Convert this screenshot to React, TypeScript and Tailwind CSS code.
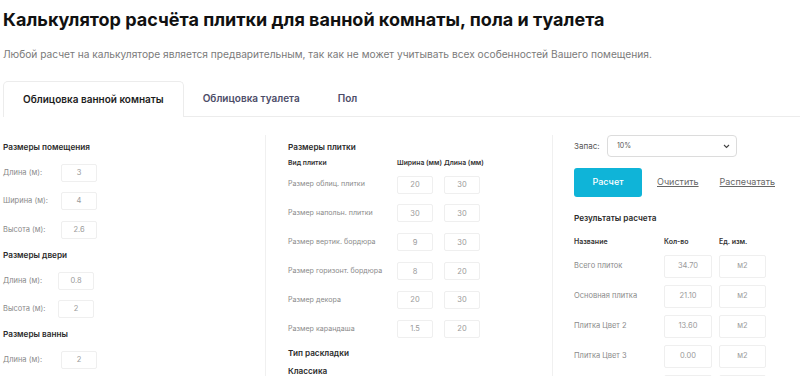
import React from "react";

const Inp = ({ v, w = "w-[36px]", h = "h-[18px]" }: { v: string; w?: string; h?: string }) => (
  <div className={`${w} ${h} border border-[#efefef] rounded-[2px] flex items-center justify-center text-[7.5px] text-[#9a9a9a] bg-white`}>
    {v}
  </div>
);

const LRow = ({ label, v, lw }: { label: string; v: string; lw: string }) => (
  <div className="flex items-center h-[18px]">
    <div className={`${lw} text-[7.5px] text-[#8a8a8a] whitespace-nowrap`}>{label}</div>
    <Inp v={v} />
  </div>
);

const H = ({ children }: { children: React.ReactNode }) => (
  <div className="h-[12px] flex items-center text-[8.2px] font-semibold text-[#2a2a2a] whitespace-nowrap">{children}</div>
);

export default function App() {
  const tiles = [
    ["Размер облиц. плитки", "20", "30"],
    ["Размер напольн. плитки", "30", "30"],
    ["Размер вертик. бордюра", "9", "30"],
    ["Размер горизонт. бордюра", "8", "20"],
    ["Размер декора", "20", "30"],
    ["Размер карандаша", "1.5", "20"],
  ];
  const results = [
    ["Всего плиток", "34.70"],
    ["Основная плитка", "21.10"],
    ["Плитка Цвет 2", "13.60"],
    ["Плитка Цвет 3", "0.00"],
    ["Плитка Цвет 4", "0.00"],
  ];
  return (
    <div className="w-[800px] h-[376px] overflow-hidden bg-white font-['Inter',sans-serif] px-[3px]">
      <h1 className="text-[18px] leading-[24px] font-bold text-[#111] pt-[8px] whitespace-nowrap">
        Калькулятор расчёта плитки для ванной комнаты, пола и туалета
      </h1>
      <p className="text-[10.2px] leading-[14px] text-[#7a7a7a] mt-[15px] whitespace-nowrap">
        Любой расчет на калькуляторе является предварительным, так как не может учитывать всех особенностей Вашего помещения.
      </p>
      <div className="flex mt-[20px] -mr-[3px]">
        <div className="h-[36px] px-[19px] flex items-center border border-b-0 border-[#ececec] rounded-t-[5px] text-[10px] font-semibold text-[#1c1c1c]">
          Облицовка ванной комнаты
        </div>
        <div className="flex-1 flex border-b border-[#ececec]">
          <div className="h-[35px] px-[19px] flex items-center text-[10px] font-semibold text-[#4c4c68]">
            Облицовка туалета
          </div>
          <div className="h-[35px] px-[19px] flex items-center text-[10px] font-semibold text-[#4c4c68]">
            Пол
          </div>
        </div>
      </div>
      <div className="flex mt-[18px] h-[300px]">
        <div className="w-[262px] pt-[6px] flex flex-col gap-[10.5px]">
          <H>Размеры помещения</H>
          <LRow label="Длина (м):" v="3" lw="w-[58px]" />
          <LRow label="Ширина (м):" v="4" lw="w-[58px]" />
          <LRow label="Высота (м):" v="2.6" lw="w-[58px]" />
          <H>Размеры двери</H>
          <LRow label="Длина (м):" v="0.8" lw="w-[55px]" />
          <LRow label="Высота (м):" v="2" lw="w-[55px]" />
          <H>Размеры ванны</H>
          <LRow label="Длина (м):" v="2" lw="w-[58px]" />
        </div>
        <div className="w-[287px] border-l border-[#f0f0f0] pl-[22px] pt-[6px] flex flex-col">
          <H>Размеры плитки</H>
          <div className="grid grid-cols-[98px_36px_36px] gap-x-[11px] mt-[5px] h-[10px] items-center text-[6.8px] font-semibold text-[#333]">
            <div>Вид плитки</div>
            <div className="whitespace-nowrap">Ширина (мм)</div>
            <div className="whitespace-nowrap">Длина (мм)</div>
          </div>
          <div className="flex flex-col gap-[10.9px] mt-[7.5px]">
            {tiles.map(([l, a, b]) => (
              <div key={l} className="grid grid-cols-[98px_36px_36px] gap-x-[11px] items-center">
                <div className="text-[7.1px] text-[#8a8a8a] whitespace-nowrap">{l}</div>
                <Inp v={a} />
                <Inp v={b} />
              </div>
            ))}
          </div>
          <div className="mt-[9px]"><H>Тип раскладки</H></div>
          <div className="mt-[5.7px]"><H>Классика</H></div>
        </div>
        <div className="flex-1 border-l border-[#f0f0f0] pl-[21px] -mr-[3px] flex flex-col">
          <div className="flex items-center h-[22px]">
            <div className="w-[33px] text-[8px] text-[#555]">Запас:</div>
            <div className="w-[130px] h-[22px] border border-[#dcdcdc] rounded-[4px] flex items-center justify-between pl-[9px] pr-[6px] text-[7px] text-[#555]">
              <span>10%</span>
              <svg width="7" height="5" viewBox="0 0 7 5" fill="none">
                <path d="M1 1l2.5 2.5L6 1" stroke="#444" strokeWidth="1.1" />
              </svg>
            </div>
          </div>
          <div className="flex items-center mt-[10.6px]">
            <div className="w-[68px] h-[29px] rounded-[3px] bg-[#0fb4d8] text-white text-[9px] font-medium flex items-center justify-center">
              Расчет
            </div>
            <span className="ml-[15px] text-[9px] text-[#666] underline">Очистить</span>
            <span className="ml-[21px] text-[9px] text-[#666] underline">Распечатать</span>
          </div>
          <div className="mt-[15.4px]"><H>Результаты расчета</H></div>
          <div className="grid grid-cols-[83px_48px_47px] gap-x-[7px] mt-[13px] h-[10px] items-center text-[7px] font-semibold text-[#333]">
            <div>Название</div>
            <div>Кол-во</div>
            <div>Ед. изм.</div>
          </div>
          <div className="flex flex-col gap-[7px] mt-[7.6px]">
            {results.map(([l, v]) => (
              <div key={l} className="grid grid-cols-[83px_48px_47px] gap-x-[7px] items-center">
                <div className="text-[7.5px] text-[#8a8a8a] whitespace-nowrap">{l}</div>
                <Inp v={v} w="w-[48px]" h="h-[23px]" />
                <Inp v="м2" w="w-[47px]" h="h-[23px]" />
              </div>
            ))}
          </div>
        </div>
      </div>
    </div>
  );
}
